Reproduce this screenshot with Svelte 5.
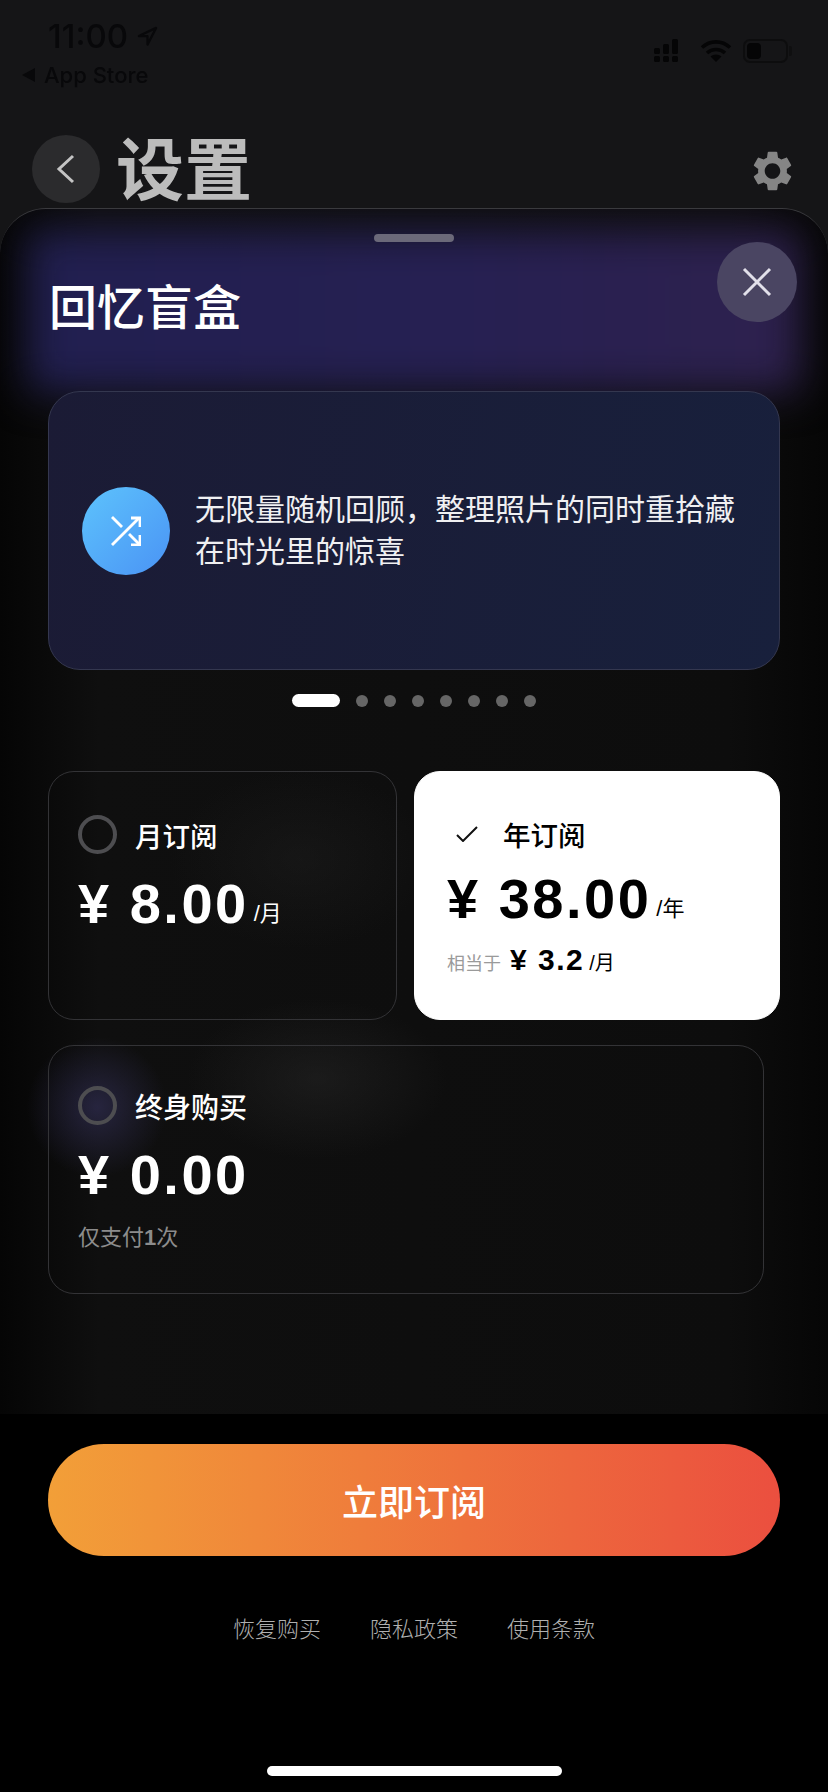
<script>
  const dots = [1, 2, 3, 4, 5, 6, 7];
  const links = ['恢复购买', '隐私政策', '使用条款'];
</script>

<main class="page">
  <header class="top">
    <div class="status">
      <div class="status-left">
        <div class="time">
          <span>11:00</span>
          <svg class="loc" viewBox="0 0 22 22"><path d="M20 2 2 10.500h9v9z" fill="none" stroke="#08080a" stroke-width="2.400" stroke-linejoin="round" /></svg>
        </div>
        <div class="back-app"><i class="tri"></i>App Store</div>
      </div>
      <div class="status-right">
        <svg class="signal" width="25" height="24" viewBox="0 0 25 24" fill="#050506">
          <rect x="0" y="9" width="6" height="6" rx="1.500" /><rect x="0" y="17" width="6" height="6" rx="1.500" />
          <rect x="9" y="5" width="6" height="10" rx="1.500" /><rect x="9" y="17" width="6" height="6" rx="1.500" />
          <rect x="18" y="0" width="6" height="15" rx="1.500" /><rect x="18" y="17" width="6" height="6" rx="1.500" />
        </svg>
        <svg class="wifi" width="32" height="24" viewBox="0 0 32 24" fill="none" stroke="#050506" stroke-width="3.600">
          <path d="M2 8.500c8-7.500 20-7.500 28 0" /><path d="M7 14c5-4.600 13-4.600 18 0" />
          <path d="M16 23l-5.500-5.500c3-2.700 8-2.700 11 0z" fill="#050506" stroke="none" />
        </svg>
        <div class="battery"><span></span></div>
      </div>
    </div>
    <div class="nav">
      <div class="nav-left">
        <button class="back" aria-label="返回">
          <svg width="24" height="34" viewBox="0 0 24 34" fill="none" stroke="#c4c4c4" stroke-width="3"><path d="M19 4 5 17l14 13" /></svg>
        </button>
        <h1>设置</h1>
      </div>
      <svg class="gear" viewBox="2.600 2 18.800 20"><path fill="#858585" d="M19.140 12.940c.04-.3.06-.61.06-.94 0-.32-.02-.64-.07-.94l2.030-1.580c.18-.14.23-.41.12-.61l-1.920-3.320c-.12-.22-.37-.29-.59-.22l-2.390.96c-.5-.38-1.030-.7-1.620-.94l-.36-2.540c-.04-.24-.24-.41-.48-.41h-3.840c-.24 0-.43.17-.47.41l-.36 2.540c-.59.24-1.130.57-1.620.94l-2.390-.96c-.22-.08-.47 0-.59.22L2.740 8.870c-.12.21-.08.47.12.61l2.030 1.580c-.05.3-.09.63-.09.94s.02.64.07.94l-2.030 1.580c-.18.14-.23.41-.12.61l1.920 3.320c.12.22.37.29.59.22l2.390-.96c.5.38 1.030.7 1.620.94l.36 2.540c.05.24.24.41.48.41h3.840c.24 0 .44-.17.47-.41l.36-2.540c.59-.24 1.130-.56 1.620-.94l2.390.96c.22.08.47 0 .59-.22l1.920-3.320c.12-.22.07-.47-.12-.61l-2.010-1.580zM12 15.900c-2.150 0-3.900-1.750-3.900-3.900s1.750-3.900 3.900-3.900 3.900 1.750 3.900 3.900-1.750 3.900-3.900 3.900z" /></svg>
    </div>
  </header>

  <section class="sheet">
    <div class="glow"></div>
    <div class="glow-plan"></div>
    <div class="handle"></div>
    <button class="close" aria-label="关闭">
      <svg width="30" height="30" viewBox="0 0 30 30" stroke="#e2e0ea" stroke-width="3"><path d="M2 2l26 26M28 2 2 28" /></svg>
    </button>
    <h2>回忆盲盒</h2>

    <div class="feature">
      <div class="feature-icon">
        <svg width="30" height="30" viewBox="0 0 30 30" fill="none" stroke="#fff" stroke-width="2.800">
          <path d="M1 29 28 2" /><path d="M1 1l10 10" /><path d="M18 18l10 10" />
          <path d="M20 2h9v9M29 19v10h-9" />
        </svg>
      </div>
      <p>无限量随机回顾，整理照片的同时重拾藏在时光里的惊喜</p>
    </div>

    <div class="pager">
      <span class="pill"></span>
      {#each dots as d (d)}
        <span class="dot"></span>
      {/each}
    </div>

    <div class="plans">
      <div class="plan">
        <div class="plan-head"><span class="radio"></span><span class="name">月订阅</span></div>
        <div class="price">¥ 8.00<small>/月</small></div>
      </div>
      <div class="plan active">
        <div class="plan-head">
          <svg class="check" width="22" height="16" viewBox="0 0 22 16" fill="none" stroke="#111" stroke-width="2"><path d="M1 9l6 6L21 1" /></svg>
          <span class="name">年订阅</span>
        </div>
        <div class="price">¥ 38.00<small>/年</small></div>
        <div class="equiv"><span>相当于</span><b>¥ 3.2</b><small>/月</small></div>
      </div>
      <div class="plan wide">
        <div class="plan-head"><span class="radio"></span><span class="name">终身购买</span></div>
        <div class="price">¥ 0.00</div>
        <div class="once">仅支付<b>1</b>次</div>
      </div>
    </div>
  </section>

  <footer class="foot">
    <button class="cta">立即订阅</button>
    <nav class="links">
      {#each links as l (l)}
        <span>{l}</span>
      {/each}
    </nav>
    <div class="home"></div>
  </footer>
</main>

<style>
  :global(body) {
    margin: 0;
    background: #000;
  }

  .page {
    width: 828px;
    height: 1792px;
    display: flex;
    flex-direction: column;
    background: #151517;
    overflow: hidden;
    font-family: "Liberation Sans", "Noto Sans CJK SC", sans-serif;
  }

  button {
    border: 0;
    padding: 0;
    font: inherit;
    display: flex;
    align-items: center;
    justify-content: center;
  }

  .top {
    height: 208px;
    flex: none;
  }

  .status {
    height: 135px;
    box-sizing: border-box;
    padding: 18px 40px 0 22px;
    display: flex;
    justify-content: space-between;
    align-items: flex-start;
    color: #08080a;
    filter: blur(0.6px);
  }

  .time {
    display: flex;
    align-items: center;
    gap: 9px;
    margin-left: 26px;
    font-family: Inter, sans-serif;
    font-size: 33px;
    font-weight: 500;
    line-height: 36px;
  }

  .loc {
    width: 21px;
    height: 21px;
  }

  .back-app {
    display: flex;
    align-items: center;
    gap: 9px;
    margin-top: 8px;
    font-family: Inter, sans-serif;
    font-size: 22px;
    font-weight: 500;
    line-height: 26px;
  }

  .tri {
    width: 0;
    height: 0;
    border-style: solid;
    border-width: 7px 13px 7px 0;
    border-color: transparent #08080a transparent transparent;
  }

  .status-right {
    display: flex;
    align-items: center;
    margin-top: 21px;
  }

  .wifi {
    margin: 0 11px 0 21px;
  }

  .battery {
    position: relative;
    width: 45px;
    height: 24px;
    box-sizing: border-box;
    border: 2px solid #0d0d0e;
    border-radius: 7px;
    padding: 2px;
    display: flex;
  }

  .battery::after {
    content: "";
    position: absolute;
    right: -6px;
    top: 5px;
    width: 3px;
    height: 10px;
    border-radius: 0 2px 2px 0;
    background: #0f0f10;
  }

  .battery span {
    width: 14px;
    background: #050506;
    border-radius: 4px;
  }

  .nav {
    display: flex;
    justify-content: space-between;
    align-items: center;
    padding: 0 36px 0 32px;
    height: 68px;
  }

  .nav-left {
    display: flex;
    align-items: center;
    gap: 16px;
  }

  .back {
    width: 68px;
    height: 68px;
    border-radius: 50%;
    background: #2b2b2d;
  }

  h1 {
    margin: 4px 0 0;
    font-size: 68px;
    font-weight: 700;
    line-height: 68px;
    color: #bcbcbc;
  }

  .gear {
    width: 39px;
    height: 40px;
    margin-top: 4px;
  }

  .sheet {
    position: relative;
    flex: 1;
    box-sizing: border-box;
    padding: 0 48px;
    border-top: 1px solid #3a3a3e;
    border-radius: 46px 46px 0 0;
    background: linear-gradient(90deg, #050505, #0f0f0f 12%, #0d0d0d 88%, #060606);
    overflow: hidden;
  }

  .glow {
    position: absolute;
    top: 22px;
    left: 28px;
    right: 28px;
    height: 160px;
    background: linear-gradient(90deg, #211f50, #262052 55%, #2e214e);
    filter: blur(20px);
  }

  .glow-plan {
    position: absolute;
    top: 560px;
    left: 0;
    right: 0;
    height: 560px;
    background:
      radial-gradient(circle at 97px 338px, rgba(62, 58, 110, 0.5), transparent 70px),
      radial-gradient(ellipse 130px 80px at 317px 310px, rgba(42, 42, 42, 0.45), transparent),
      radial-gradient(ellipse 130px 90px at 300px 90px, rgba(36, 36, 36, 0.35), transparent);
  }

  .handle {
    position: relative;
    width: 80px;
    height: 8px;
    margin: 25px auto 0;
    border-radius: 4px;
    background: #6b6979;
  }

  .close {
    position: absolute;
    top: 33px;
    right: 31px;
    width: 80px;
    height: 80px;
    border-radius: 50%;
    background: #4a4562;
  }

  h2 {
    position: relative;
    margin: 37px 0 0 1px;
    font-size: 48px;
    font-weight: 500;
    line-height: 60px;
    color: #fff;
  }

  .feature {
    position: relative;
    height: 279px;
    box-sizing: border-box;
    margin-top: 52px;
    padding: 0 38px 0 33px;
    display: flex;
    align-items: center;
    gap: 25px;
    border: 1.500px solid #34374f;
    border-radius: 32px;
    background: linear-gradient(100deg, #1b1b35, #18203c);
  }

  .feature-icon {
    flex: none;
    width: 88px;
    height: 88px;
    border-radius: 50%;
    display: flex;
    align-items: center;
    justify-content: center;
    background: linear-gradient(135deg, #5dc3fc, #4a93f5);
  }

  .feature p {
    margin: 0;
    font-size: 30px;
    line-height: 42px;
    color: #f0f0f2;
  }

  .pager {
    position: relative;
    display: flex;
    justify-content: center;
    align-items: center;
    gap: 16px;
    margin-top: 24px;
    height: 13px;
  }

  .pill {
    width: 48px;
    height: 13px;
    border-radius: 7px;
    background: #fff;
  }

  .dot {
    width: 12px;
    height: 12px;
    border-radius: 50%;
    background: #666;
  }

  .plans {
    position: relative;
    display: grid;
    grid-template-columns: 349px 366px;
    gap: 25px 17px;
    margin-top: 64px;
  }

  .plan {
    height: 249px;
    box-sizing: border-box;
    padding: 43px 0 0 29px;
    border: 1.500px solid #333336;
    border-radius: 26px;
    color: #fff;
  }

  .plan.active {
    background: #fff;
    border-color: #fff;
    color: #000;
    padding: 42px 0 0 32px;
  }

  .plan.wide {
    grid-column: 1 / -1;
    width: 716px;
    padding-top: 40px;
  }

  .plan-head {
    display: flex;
    align-items: center;
    gap: 18px;
    height: 39px;
  }

  .radio {
    width: 39px;
    height: 39px;
    box-sizing: border-box;
    border: 4px solid #4d4d50;
    border-radius: 50%;
  }

  .name {
    font-size: 27.500px;
    font-weight: 500;
  }

  .wide .name {
    font-size: 28px;
  }

  .check {
    margin: 0 7px 0 9px;
  }

  .price {
    margin-top: 22px;
    font-size: 56px;
    font-weight: 700;
    letter-spacing: 2.500px;
    line-height: 56px;
    height: 56px;
    white-space: nowrap;
  }

  .active .price {
    margin-top: 18px;
  }

  .price small {
    margin-left: 5px;
    font-size: 22px;
    font-weight: 400;
    letter-spacing: 0;
    line-height: 1;
    vertical-align: 2px;
  }

  .equiv {
    display: flex;
    align-items: baseline;
    height: 34px;
    margin-top: 16px;
    line-height: 34px;
    white-space: nowrap;
  }

  .equiv span {
    margin-right: 9px;
    font-size: 18px;
    color: #9a9a9a;
  }

  .equiv b {
    font-size: 30px;
    letter-spacing: 1.500px;
  }

  .equiv small {
    margin-left: 5px;
    font-size: 20px;
  }

  .once {
    margin-top: 21px;
    font-size: 22px;
    line-height: 28px;
    color: #8c8c8c;
  }

  .foot {
    flex: none;
    height: 378px;
    box-sizing: border-box;
    padding: 30px 48px 0;
    display: flex;
    flex-direction: column;
    align-items: center;
    background: #000;
  }

  .cta {
    width: 732px;
    height: 112px;
    flex: none;
    border-radius: 56px;
    background: linear-gradient(90deg, #f29f38, #eb4f3f);
    color: #fff;
    font-size: 36px;
    font-weight: 500;
  }

  .links {
    display: flex;
    gap: 49px;
    margin-top: 58px;
    font-size: 22px;
    font-weight: 300;
    line-height: 32px;
    color: #b0b0b0;
  }

  .home {
    width: 295px;
    height: 10px;
    margin-top: 120px;
    border-radius: 5px;
    background: #fff;
  }
</style>
